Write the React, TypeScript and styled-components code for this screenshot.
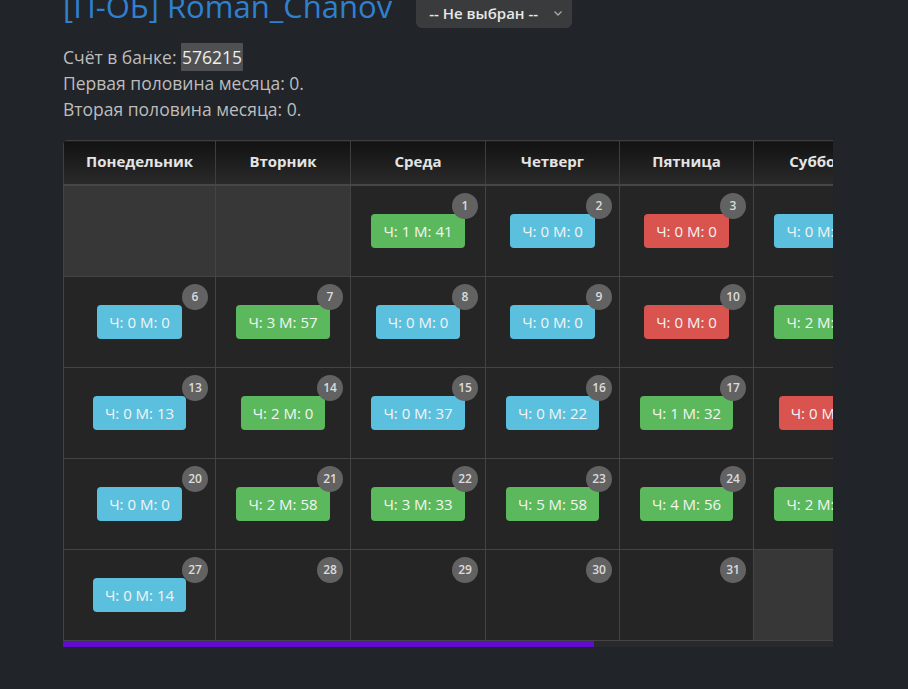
import React from "react";
import styled, { createGlobalStyle } from "styled-components";

const Global = createGlobalStyle`
  html, body { margin: 0; padding: 0; background: #212429; overflow: hidden; }
  body { font-family: "Open Sans", "Noto Sans", sans-serif; }
`;

const Page = styled.div`
  padding-left: 63px;
  width: 770px;
`;

const TopRow = styled.div`
  display: flex;
  align-items: flex-start;
  gap: 24px;
  height: 40px;
`;

const Title = styled.h1`
  margin: -16px 0 0 0;
  font-size: 31px;
  line-height: 44px;
  font-weight: 400;
  color: #2f80d1;
  white-space: nowrap;
`;

const Select = styled.div`
  margin-top: -12px;
  width: 156px;
  height: 40px;
  box-sizing: border-box;
  padding: 9px 9px 0 13px;
  background: #3a3b3c;
  border-radius: 6px;
  display: flex;
  align-items: center;
  justify-content: space-between;
  color: #e8e8e8;
  font-size: 15px;
  font-weight: 600;
`;

const Chevron = styled.svg`
  width: 10px;
  height: 10px;
  color: #aaa;
`;

const Info = styled.div`
  margin-top: 4px;
  color: #bdbdbd;
  font-size: 17.5px;
  line-height: 26px;
`;

const Highlight = styled.span`
  background: #4f5052;
  color: #eee;
  padding: 2px 1px;
`;

const Frame = styled.div`
  margin-top: 18px;
  width: 770px;
`;

const Scroller = styled.div`
  width: 770px;
  overflow: hidden;
  border-top-left-radius: 5px;
`;

const ScrollTrack = styled.div`
  height: 6px;
  background: #27292d;
`;

const ScrollThumb = styled.div`
  height: 100%;
  background: #5f0bd0;
`;

const Table = styled.table`
  border-collapse: collapse;
  table-layout: fixed;
  width: 1116px;
  border: 1px solid #3c3e42;
`;

const Th = styled.th`
  height: 39px;
  padding: 0 0 4px 0;
  background: linear-gradient(#121212, #2a2a2a);
  color: #e4e4e4;
  font-size: 15px;
  font-weight: 700;
  border: 1px solid #3e3e3e;
  border-bottom: 2px solid #474747;
  white-space: nowrap;
  overflow: hidden;
`;

const Td = styled.td<{ $empty?: boolean }>`
  position: relative;
  height: 90px;
  padding: 0;
  text-align: center;
  vertical-align: middle;
  background: ${(p) => (p.$empty ? "#383737" : "#252525")};
  border: 1px solid #444;
`;

const DayNum = styled.span`
  position: absolute;
  top: 7px;
  right: 7px;
  width: 26px;
  height: 26px;
  border-radius: 50%;
  background: #626262;
  color: #dcdcdc;
  font-size: 12px;
  font-weight: 600;
  line-height: 26px;
  text-align: center;
`;

const colors = { g: "#5cb85c", b: "#5bc0de", r: "#d9534f" } as const;

const Label = styled.span<{ $c: keyof typeof colors }>`
  display: inline-block;
  height: 34px;
  line-height: 34px;
  padding: 0 12px;
  border-radius: 4px;
  background: ${(p) => colors[p.$c]};
  color: #f4f4f4;
  font-size: 15px;
  white-space: nowrap;
`;

type Cell = null | { d: number; t?: string; c?: keyof typeof colors };

const days = ["Понедельник", "Вторник", "Среда", "Четверг", "Пятница", "Суббота", "Воскресенье"];
const widths = [152, 135, 135, 134, 134, 135, 291];
const tableWidth = 1116;
const viewWidth = 770;

const rows: Cell[][] = [
  [null, null, { d: 1, t: "Ч: 1 М: 41", c: "g" }, { d: 2, t: "Ч: 0 М: 0", c: "b" }, { d: 3, t: "Ч: 0 М: 0", c: "r" }, { d: 4, t: "Ч: 0 М: 25", c: "b" }, { d: 5, t: "Ч: 0 М: 0", c: "b" }],
  [{ d: 6, t: "Ч: 0 М: 0", c: "b" }, { d: 7, t: "Ч: 3 М: 57", c: "g" }, { d: 8, t: "Ч: 0 М: 0", c: "b" }, { d: 9, t: "Ч: 0 М: 0", c: "b" }, { d: 10, t: "Ч: 0 М: 0", c: "r" }, { d: 11, t: "Ч: 2 М: 15", c: "g" }, { d: 12, t: "Ч: 1 М: 10", c: "g" }],
  [{ d: 13, t: "Ч: 0 М: 13", c: "b" }, { d: 14, t: "Ч: 2 М: 0", c: "g" }, { d: 15, t: "Ч: 0 М: 37", c: "b" }, { d: 16, t: "Ч: 0 М: 22", c: "b" }, { d: 17, t: "Ч: 1 М: 32", c: "g" }, { d: 18, t: "Ч: 0 М: 0", c: "r" }, { d: 19, t: "Ч: 0 М: 0", c: "b" }],
  [{ d: 20, t: "Ч: 0 М: 0", c: "b" }, { d: 21, t: "Ч: 2 М: 58", c: "g" }, { d: 22, t: "Ч: 3 М: 33", c: "g" }, { d: 23, t: "Ч: 5 М: 58", c: "g" }, { d: 24, t: "Ч: 4 М: 56", c: "g" }, { d: 25, t: "Ч: 2 М: 40", c: "g" }, { d: 26, t: "Ч: 1 М: 5", c: "g" }],
  [{ d: 27, t: "Ч: 0 М: 14", c: "b" }, { d: 28 }, { d: 29 }, { d: 30 }, { d: 31 }, null, null],
];

export default function App() {
  return (
    <>
      <Global />
      <Page>
        <TopRow>
          <Title>[П-ОБ] Roman_Chanov</Title>
          <Select>
            <span>-- Не выбран --</span>
            <Chevron viewBox="0 0 10 10" fill="none" stroke="currentColor" strokeWidth="1.3">
              <path d="M1.5 3.5 L5 7 L8.5 3.5" />
            </Chevron>
          </Select>
        </TopRow>
        <Info>
          <div>
            Счёт в банке: <Highlight>576215</Highlight>
          </div>
          <div>Первая половина месяца: 0.</div>
          <div>Вторая половина месяца: 0.</div>
        </Info>
        <Frame>
          <Scroller>
            <Table>
              <colgroup>
                {widths.map((w, i) => (
                  <col key={i} style={{ width: w }} />
                ))}
              </colgroup>
              <thead>
                <tr>
                  {days.map((d) => (
                    <Th key={d}>{d}</Th>
                  ))}
                </tr>
              </thead>
              <tbody>
                {rows.map((r, i) => (
                  <tr key={i}>
                    {r.map((c, j) =>
                      c ? (
                        <Td key={j}>
                          <DayNum>{c.d}</DayNum>
                          {c.t && c.c && <Label $c={c.c}>{c.t}</Label>}
                        </Td>
                      ) : (
                        <Td key={j} $empty />
                      )
                    )}
                  </tr>
                ))}
              </tbody>
            </Table>
          </Scroller>
          <ScrollTrack>
            <ScrollThumb style={{ width: `${(viewWidth / tableWidth) * 100}%` }} />
          </ScrollTrack>
        </Frame>
      </Page>
    </>
  );
}
